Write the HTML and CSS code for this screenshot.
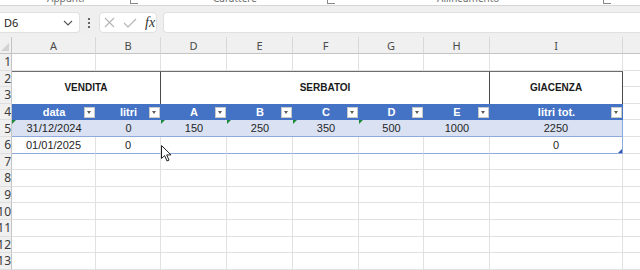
FILE: index.html
```html
<!DOCTYPE html>
<html lang="it">
<head>
    <meta charset="UTF-8">
    <meta name="viewport" content="width=device-width, initial-scale=1.0">
    <link rel="stylesheet" href="styles.css">
    <title>Serbatoi - giacenza</title>
</head>
<body>

    <!-- ribbon, scrolled so only the group labels' feet show -->
    <div class="ribbon">
        <div class="ribbon-labels">
            <span></span>
            <span class="grp">Appunti</span>
            <span class="launch"></span>
            <span class="grp">Carattere</span>
            <span class="launch"></span>
            <span class="grp">Allineamento</span>
            <span class="launch"></span>
        </div>
    </div>

    <div class="formula-bar">
        <div class="name-box">
            <span>D6</span>
            <svg width="10" height="6" viewBox="0 0 10 6"><polyline points="1,1 5,5 9,1" fill="none" stroke="#555" stroke-width="1.1"/></svg>
        </div>
        <svg class="fb-dots" width="4" height="12" viewBox="0 0 4 12">
            <circle cx="2" cy="2" r="1.1" fill="#444"/>
            <circle cx="2" cy="6" r="1.1" fill="#444"/>
            <circle cx="2" cy="10" r="1.1" fill="#444"/>
        </svg>
        <div class="fb-buttons">
            <svg width="11" height="11" viewBox="0 0 11 11"><path d="M1 1 L10 10 M10 1 L1 10" stroke="#b4b4b4" stroke-width="1.1"/></svg>
            <svg width="14" height="10" viewBox="0 0 14 10"><polyline points="1,5 5,9 13,1" fill="none" stroke="#b4b4b4" stroke-width="1.1"/></svg>
            <span class="fx">fx</span>
        </div>
        <div class="fb-input"></div>
    </div>

    <div class="sheet">
        <!-- column headers -->
        <div class="corner"></div>
        <div class="ch">A</div><div class="ch">B</div><div class="ch">D</div><div class="ch">E</div>
        <div class="ch">F</div><div class="ch">G</div><div class="ch">H</div><div class="ch">I</div><div class="ch"></div>

        <!-- 1 -->
        <div class="rh"><span>1</span></div>
        <div class="c"></div><div class="c"></div><div class="c"></div><div class="c"></div><div class="c"></div>
        <div class="c"></div><div class="c"></div><div class="c"></div><div class="c"></div>

        <!-- 2-3 -->
        <div class="rh"><span>2</span></div>
        <div class="title span-ab">VENDITA</div>
        <div class="title span-dh">SERBATOI</div>
        <div class="title">GIACENZA</div>
        <div class="c"></div>
        <div class="rh"><span>3</span></div>
        <div class="c"></div>

        <!-- 4 -->
        <div class="rh"><span>4</span></div>
        <div class="th">data<i class="filter"></i></div>
        <div class="th">litri<i class="filter"></i></div>
        <div class="th">A<i class="filter"></i></div>
        <div class="th">B<i class="filter"></i></div>
        <div class="th">C<i class="filter"></i></div>
        <div class="th">D<i class="filter"></i></div>
        <div class="th">E<i class="filter"></i></div>
        <div class="th">litri tot.<i class="filter"></i></div>
        <div class="c"></div>

        <!-- 5 -->
        <div class="rh"><span>5</span></div>
        <div class="band flag">31/12/2024</div>
        <div class="band">0</div>
        <div class="band flag">150</div>
        <div class="band flag">250</div>
        <div class="band flag">350</div>
        <div class="band flag">500</div>
        <div class="band">1000</div>
        <div class="band last">2250</div>
        <div class="c"></div>

        <!-- 6 -->
        <div class="rh"><span>6</span></div>
        <div class="c row-end">01/01/2025</div>
        <div class="c row-end">0</div>
        <div class="c row-end"></div>
        <div class="c row-end"></div>
        <div class="c row-end"></div>
        <div class="c row-end"></div>
        <div class="c row-end"></div>
        <div class="c row-end last resize">0</div>
        <div class="c"></div>

        <!-- 7-13 -->
        <div class="rh"><span>7</span></div>
        <div class="c"></div><div class="c"></div><div class="c"></div><div class="c"></div><div class="c"></div>
        <div class="c"></div><div class="c"></div><div class="c"></div><div class="c"></div>
        <div class="rh"><span>8</span></div>
        <div class="c"></div><div class="c"></div><div class="c"></div><div class="c"></div><div class="c"></div>
        <div class="c"></div><div class="c"></div><div class="c"></div><div class="c"></div>
        <div class="rh"><span>9</span></div>
        <div class="c"></div><div class="c"></div><div class="c"></div><div class="c"></div><div class="c"></div>
        <div class="c"></div><div class="c"></div><div class="c"></div><div class="c"></div>
        <div class="rh"><span>10</span></div>
        <div class="c"></div><div class="c"></div><div class="c"></div><div class="c"></div><div class="c"></div>
        <div class="c"></div><div class="c"></div><div class="c"></div><div class="c"></div>
        <div class="rh"><span>11</span></div>
        <div class="c"></div><div class="c"></div><div class="c"></div><div class="c"></div><div class="c"></div>
        <div class="c"></div><div class="c"></div><div class="c"></div><div class="c"></div>
        <div class="rh"><span>12</span></div>
        <div class="c"></div><div class="c"></div><div class="c"></div><div class="c"></div><div class="c"></div>
        <div class="c"></div><div class="c"></div><div class="c"></div><div class="c"></div>
        <div class="rh"><span>13</span></div>
        <div class="c"></div><div class="c"></div><div class="c"></div><div class="c"></div><div class="c"></div>
        <div class="c"></div><div class="c"></div><div class="c"></div><div class="c"></div>
    </div>

    <!-- mouse pointer over the sheet -->
    <svg class="pointer" width="11" height="17" viewBox="0 0 11 17">
        <path d="M0.5 0.5 L0.5 13.5 L3.6 10.6 L6 16 L8 15.1 L5.7 9.9 L10 9.9 Z" fill="#fff" stroke="#222" stroke-width="1"/>
    </svg>

</body>
</html>
```

FILE: styles.css
```css
body {
    margin: 0;
    width: 640px;
    height: 270px;
    overflow: hidden;
    position: relative;
    background-color: #efefef;
    font-family: 'Liberation Sans', Arial, sans-serif;
}

.ribbon {
    height: 5px;
    background-color: #fff;
    border-bottom: 1px solid #d6d6d6;
    overflow: hidden;
}

.ribbon-labels {
    display: grid;
    grid-template-columns: 47px 83px 83px 114px 110px 166px 20px;
    align-items: start;
    margin-top: -8px;
    font-family: 'Noto Sans', sans-serif;
    font-size: 10px;
    line-height: 13px;
    color: #707070;
    white-space: nowrap;
}

.launch {
    width: 7px;
    height: 7px;
    margin-top: 4px;
    border-left: 1px solid #888;
    border-bottom: 1px solid #888;
}

.formula-bar {
    display: flex;
    align-items: center;
    height: 21px;
    margin-top: 6px;
}

.name-box {
    width: 80px;
    height: 21px;
    box-sizing: border-box;
    display: flex;
    align-items: center;
    justify-content: space-between;
    padding: 0 6px 0 4px;
    background-color: #fff;
    border: 1px solid #e0e0e0;
    border-left: none;
    border-radius: 0 4px 4px 0;
    font-family: 'Noto Sans', sans-serif;
    font-size: 11px;
    color: #222;
}

.fb-dots {
    margin-left: 7px;
}

.fb-buttons {
    width: 58px;
    height: 21px;
    box-sizing: border-box;
    margin-left: 8px;
    display: flex;
    align-items: center;
    gap: 8px;
    padding-left: 4px;
    background-color: #fff;
    border: 1px solid #e0e0e0;
    border-radius: 4px;
}

.fx {
    font-family: 'Liberation Serif', serif;
    font-style: italic;
    font-size: 14px;
    color: #333;
}

.fb-input {
    flex: 1;
    height: 21px;
    box-sizing: border-box;
    margin-left: 6px;
    background-color: #fff;
    border: 1px solid #e0e0e0;
    border-right: none;
    border-radius: 4px 0 0 4px;
}

.sheet {
    display: grid;
    grid-template-columns: 12px 84px 65px 66px 66px 66px 65px 66px 133px 40px;
    grid-template-rows: 17px repeat(13, 16.6px);
    margin-top: 4px;
    background-color: #fff;
    font-size: 11px;
    color: #262626;
}

.sheet > div {
    box-sizing: border-box;
    display: flex;
    align-items: center;
    justify-content: center;
    position: relative;
    white-space: nowrap;
}

.corner, .ch {
    background-color: #f0f0f0;
    border-bottom: 1px solid #c4c4c4;
}

.corner {
    border-right: 1px solid #c4c4c4;
}

.corner::after {
    content: "";
    position: absolute;
    right: 2px;
    bottom: 2px;
    border-left: 8px solid transparent;
    border-bottom: 8px solid #d2d2d2;
}

.ch {
    border-right: 1px solid #d8d8d8;
    font-family: 'Noto Sans', sans-serif;
    font-size: 11px;
    color: #4a4a4a;
    padding-top: 1px;
}

.sheet > .rh {
    justify-content: flex-end;
    overflow: hidden;
    padding-right: 0;
    background-color: #f0f0f0;
    border-right: 1px solid #c4c4c4;
    border-bottom: 1px solid #dedede;
    font-family: 'Noto Sans', sans-serif;
    font-size: 12px;
    color: #3a3a3a;
}

.c {
    border-right: 1px solid #e1e1e1;
    border-bottom: 1px solid #e1e1e1;
}

.title {
    grid-row: span 2;
    border-top: 1px solid #6e6e6e;
    border-right: 1px solid #4a4a4a;
    font-weight: bold;
    font-size: 10px;
    color: #1a1a1a;
}

.span-ab { grid-column: span 2; }
.span-dh { grid-column: span 5; }

.th {
    background-color: #4472c4;
    color: #fff;
    font-weight: bold;
}

.filter {
    position: absolute;
    right: 1px;
    top: 3px;
    width: 11px;
    height: 11px;
    box-sizing: border-box;
    background-color: #fff;
    border: 1px solid #c9c9c9;
}

.filter::after {
    content: "";
    position: absolute;
    left: 2px;
    top: 3px;
    border-left: 2.5px solid transparent;
    border-right: 2.5px solid transparent;
    border-top: 3px solid #5a5a5a;
}

.band {
    background-color: #d9e1f2;
    border-bottom: 1px solid #8ea9db;
}

.sheet > .row-end {
    border-bottom: 1px solid #8ea9db;
}

.sheet > .last {
    border-right: 1px solid #8ea9db;
}

.flag::before {
    content: "";
    position: absolute;
    left: 0;
    top: 0;
    border-top: 4px solid #1b8a36;
    border-right: 4px solid transparent;
}

.resize::after {
    content: "";
    position: absolute;
    right: 0;
    bottom: 0;
    border-left: 4px solid transparent;
    border-bottom: 4px solid #3451b2;
}

.pointer {
    position: absolute;
    left: 161px;
    top: 145px;
}
```
